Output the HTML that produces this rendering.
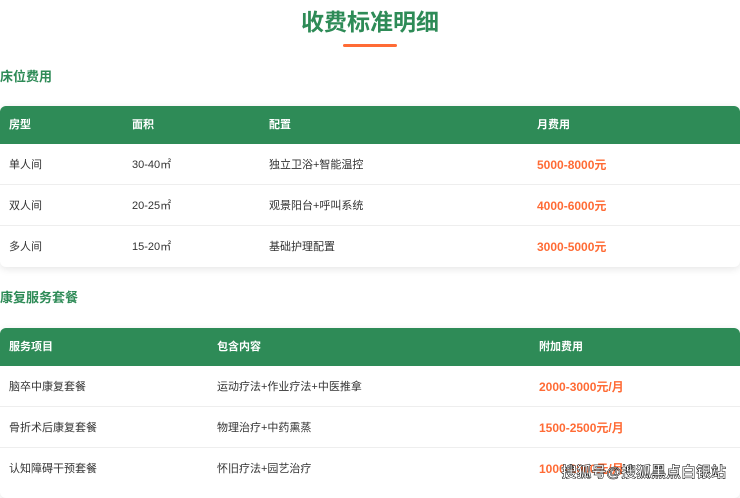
<!DOCTYPE html>
<html><head><meta charset="utf-8"><style>
*{margin:0;padding:0;box-sizing:border-box}
body{width:740px;height:488px;overflow:hidden;background:#fff;font-family:"Liberation Sans","Noto Sans CJK SC",sans-serif;position:relative}
.t{position:absolute;left:0;width:740px;text-align:center;top:3px;font-size:23px;font-weight:bold;color:#2e8b57}
.u{position:absolute;left:343px;top:44px;width:54px;height:3px;background:#ff6b35;border-radius:2px}
.h{position:absolute;left:0;font-size:13px;font-weight:bold;color:#2e8b57}
.tb{position:absolute;left:0;width:740px;border-radius:6px;box-shadow:0 2px 8px rgba(0,0,0,.1);overflow:hidden;background:#fff}
.r{position:relative;height:41px;border-bottom:1px solid #eee;font-size:11px;color:#333}
.r.hd{height:38px;background:#2e8b57;color:#fff;font-weight:bold;border:none}
.r span{position:absolute;top:0;line-height:43px}
.r.hd span{line-height:39px}
.p{color:#ff6b35;font-weight:bold;font-size:12px}
.wm{position:absolute;right:14px;top:461px;font-size:15px;color:#fff;-webkit-text-stroke:0.5px #000;font-weight:bold}
</style></head><body>
<div class="t">收费标准明细</div>
<div class="u"></div>
<div class="h" style="top:66px">床位费用</div>
<div class="tb" style="top:106px">
<div class="r hd"><span style="left:9px">房型</span><span style="left:132px">面积</span><span style="left:269px">配置</span><span style="left:537px">月费用</span></div>
<div class="r"><span style="left:9px">单人间</span><span style="left:132px">30-40㎡</span><span style="left:269px">独立卫浴+智能温控</span><span class="p" style="left:537px">5000-8000元</span></div>
<div class="r"><span style="left:9px">双人间</span><span style="left:132px">20-25㎡</span><span style="left:269px">观景阳台+呼叫系统</span><span class="p" style="left:537px">4000-6000元</span></div>
<div class="r" style="border:none"><span style="left:9px">多人间</span><span style="left:132px">15-20㎡</span><span style="left:269px">基础护理配置</span><span class="p" style="left:537px">3000-5000元</span></div>
</div>
<div class="h" style="top:287px">康复服务套餐</div>
<div class="tb" style="top:328px;height:170px">
<div class="r hd"><span style="left:9px">服务项目</span><span style="left:217px">包含内容</span><span style="left:539px">附加费用</span></div>
<div class="r"><span style="left:9px">脑卒中康复套餐</span><span style="left:217px">运动疗法+作业疗法+中医推拿</span><span class="p" style="left:539px">2000-3000元/月</span></div>
<div class="r"><span style="left:9px">骨折术后康复套餐</span><span style="left:217px">物理治疗+中药熏蒸</span><span class="p" style="left:539px">1500-2500元/月</span></div>
<div class="r" style="border:none"><span style="left:9px">认知障碍干预套餐</span><span style="left:217px">怀旧疗法+园艺治疗</span><span class="p" style="left:539px">1000-2000元/月</span></div>
</div>
<div class="wm">搜狐号@搜狐黑点白银站</div>
</body></html>
